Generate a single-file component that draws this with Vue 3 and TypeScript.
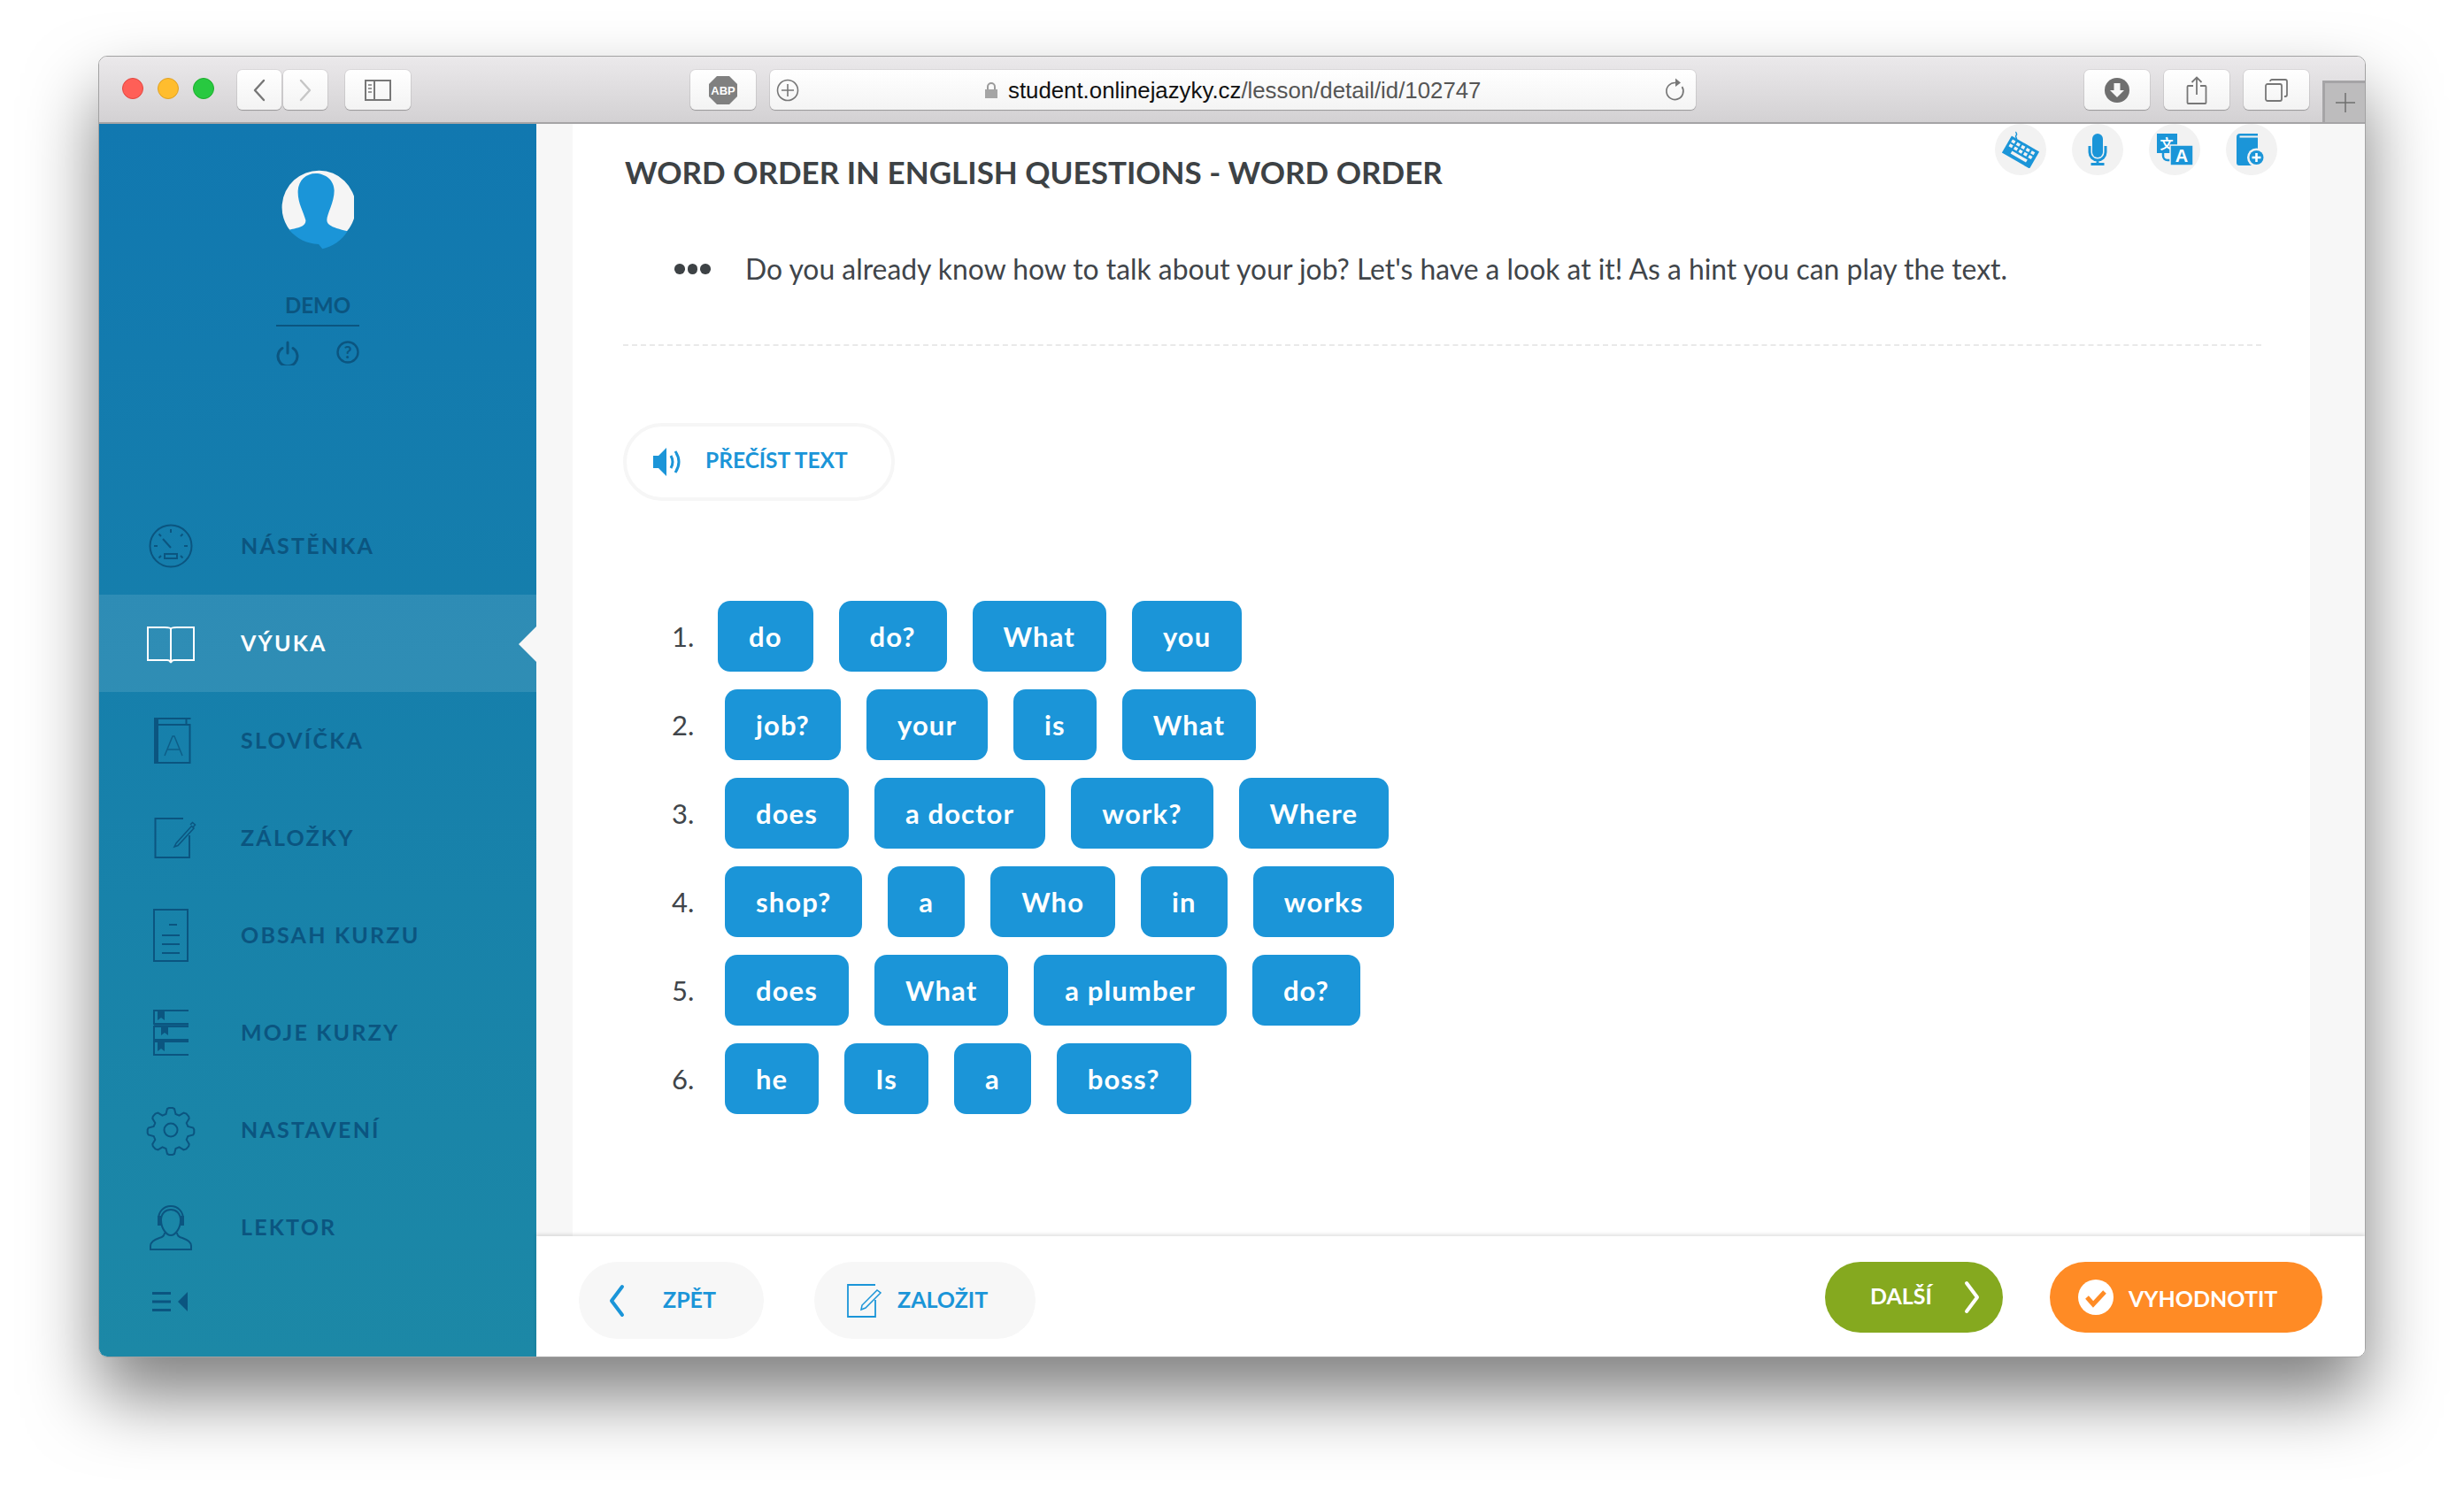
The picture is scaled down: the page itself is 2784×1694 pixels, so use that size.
<script setup lang="ts">
interface MenuItem { label: string; icon: string; active?: boolean }
const menu: MenuItem[] = [
  { label: 'NÁSTĚNKA', icon: 'gauge' },
  { label: 'VÝUKA', icon: 'book', active: true },
  { label: 'SLOVÍČKA', icon: 'vocab' },
  { label: 'ZÁLOŽKY', icon: 'note' },
  { label: 'OBSAH KURZU', icon: 'doc' },
  { label: 'MOJE KURZY', icon: 'courses' },
  { label: 'NASTAVENÍ', icon: 'gear' },
  { label: 'LEKTOR', icon: 'tutor' },
]
const rows: string[][] = [
  ['do', 'do?', 'What', 'you'],
  ['job?', 'your', 'is', 'What'],
  ['does', 'a doctor', 'work?', 'Where'],
  ['shop?', 'a', 'Who', 'in', 'works'],
  ['does', 'What', 'a plumber', 'do?'],
  ['he', 'Is', 'a', 'boss?'],
]
const keyCols = [0, 1, 2, 3, 4]
const keyRows = [0, 1]
</script>

<template>
  <div class="page">
    <div class="window">
      <header class="toolbar">
        <div class="lights">
          <span class="light red"></span><span class="light yellow"></span><span class="light green"></span>
        </div>
        <div class="navpair">
          <button class="tb nav"><svg width="16" height="26" viewBox="0 0 16 26"><path d="M13 2 3 13l10 11" fill="none" stroke="#777" stroke-width="2.400" stroke-linecap="round" stroke-linejoin="round"/></svg></button>
          <button class="tb nav"><svg width="16" height="26" viewBox="0 0 16 26"><path d="M3 2l10 11L3 24" fill="none" stroke="#c6c6c6" stroke-width="2.400" stroke-linecap="round" stroke-linejoin="round"/></svg></button>
        </div>
        <button class="tb side"><svg width="30" height="24" viewBox="0 0 30 24"><rect x="1" y="1" width="28" height="22" fill="none" stroke="#777" stroke-width="2"/><path d="M11 1v22" stroke="#777" stroke-width="2"/><path d="M4 6h4M4 10h4M4 14h4" stroke="#999" stroke-width="2"/></svg></button>
        <button class="tb abp"><svg width="34" height="34" viewBox="0 0 34 34"><path d="M10 1h14l9 9v14l-9 9H10l-9-9V10z" fill="#808080"/><text x="17" y="22" text-anchor="middle" class="abp-text">ABP</text></svg></button>
        <div class="urlbar">
          <svg class="plus" width="26" height="26" viewBox="0 0 26 26"><circle cx="13" cy="13" r="11.500" fill="none" stroke="#777" stroke-width="1.600"/><path d="M13 6v14M6 13h14" stroke="#777" stroke-width="1.600"/></svg>
          <div class="urltext">
            <svg width="16" height="20" viewBox="0 0 16 20"><path d="M4 9V6a4 4 0 0 1 8 0v3" fill="none" stroke="#9b9b9b" stroke-width="2"/><rect x="1" y="9" width="14" height="10" fill="#a5a5a5"/></svg>
            <span class="host">student.onlinejazyky.cz</span><span class="path">/lesson/detail/id/102747</span>
          </div>
          <svg class="reload" width="24" height="28" viewBox="0 0 24 28"><path d="M19.500 11A9.500 9.500 0 1 1 12 6.500" fill="none" stroke="#777" stroke-width="1.700"/><path d="M12 1.500 18 6.500 12 11z" fill="#777"/></svg>
        </div>
        <div class="tb-right">
          <button class="tb small"><svg width="28" height="28" viewBox="0 0 28 28"><circle cx="14" cy="14" r="14" fill="#6f6f6f"/><path d="M10.500 6h7v8H22l-8 8-8-8h4.500z" fill="#f7f7f7"/></svg></button>
          <button class="tb small"><svg width="24" height="32" viewBox="0 0 24 32"><path d="M8 11H2.500a1 1 0 0 0-1 1v18a1 1 0 0 0 1 1h19a1 1 0 0 0 1-1V12a1 1 0 0 0-1-1H16" fill="none" stroke="#777" stroke-width="1.800"/><path d="M12 21V1.500M6.500 7 12 1.500 17.500 7" fill="none" stroke="#777" stroke-width="1.800"/></svg></button>
          <button class="tb small"><svg width="26" height="26" viewBox="0 0 26 26"><rect x="1" y="6" width="18" height="19" rx="2" fill="none" stroke="#777" stroke-width="1.800"/><path d="M6 3V3a2 2 0 0 1 2-2h15a2 2 0 0 1 2 2v15a2 2 0 0 1-2 2h-1" fill="none" stroke="#777" stroke-width="1.800"/></svg></button>
        </div>
        <div class="newtab"><svg width="22" height="22" viewBox="0 0 22 22"><path d="M11 0v22M0 11h22" stroke="#6f6f6f" stroke-width="1.500"/></svg></div>
      </header>

      <div class="body">
        <aside class="sidebar">
          <div class="profile">
            <svg class="avatar" width="84" height="94" viewBox="620 158 252 282">
              <path d="M655 375A125 125 0 1 1 848 378Z" fill="#f5f5f5"/>
              <path d="M652 373C690 365 710 360 708 340 700 310 680 280 682 240 684 205 710 182 742 182 775 182 805 205 805 240 805 280 780 320 780 340 780 360 810 368 850 378 830 410 800 430 765 438L752 422C710 418 680 405 652 373Z" fill="#1b95d8"/>
            </svg>
            <div class="username">DEMO</div>
            <div class="profile-actions">
              <svg width="26" height="28" viewBox="0 0 26 28"><path d="M7 8.500a11 11 0 1 0 12 0" fill="none" stroke="#0b5580" stroke-width="3" stroke-linecap="round"/><path d="M13 2v12" stroke="#0b5580" stroke-width="3" stroke-linecap="round"/></svg>
              <svg width="26" height="26" viewBox="0 0 26 26"><circle cx="13" cy="13" r="11.500" fill="none" stroke="#0b5580" stroke-width="2.400"/><text x="13" y="19.500" text-anchor="middle" class="q">?</text></svg>
            </div>
          </div>

          <nav class="menu">
            <a v-for="item in menu" :key="item.label" class="item" :class="{ active: item.active }">
              <svg class="ico" width="60" height="60" viewBox="0 0 60 60" fill="none" stroke="currentColor" stroke-width="2">
                <template v-if="item.icon === 'gauge'">
                  <circle cx="30" cy="30" r="23.500"/>
                  <path d="M30 11v4M43.500 16.500l-2.500 2.500M49 30h-4M16.500 16.500l2.500 2.500M11 30h4M16.500 43.500 19 41M43.500 43.500 41 41M21 22l9 10"/>
                  <rect x="23" y="39" width="14" height="5"/>
                </template>
                <template v-else-if="item.icon === 'book'">
                  <path d="M30 52c-.5-2-2-3-4-3H4V12h19c4 0 7 .5 7 2 0-1.500 3-2 7-2h19v37H34c-2 0-3.500 1-4 3zM30 14v38"/>
                </template>
                <template v-else-if="item.icon === 'vocab'">
                  <path d="M12.500 5h40M12.500 5v50h39V12h-39M47.500 12V5"/>
                  <path d="M12 5h3v50h-3z" fill="currentColor"/>
                  <path d="M23 47l9-22h2l9 22M26 40h14" stroke-width="1.500" opacity=".8"/>
                </template>
                <template v-else-if="item.icon === 'note'">
                  <path d="M44 8H12.500v44h38.500V27"/>
                  <path d="M36 36l-2 4 4-1.500 18-19.500-2.500-2.500zM52 15l2.500-2.500 3 2.500-2.500 3" stroke-width="1.500"/>
                </template>
                <template v-else-if="item.icon === 'doc'">
                  <path d="M11 1h38v58H11z"/>
                  <path d="M28 18h9M20 30h20M20 40h20M20 50h20"/>
                </template>
                <template v-else-if="item.icon === 'courses'">
                  <path d="M50 5H11v15h39M50 23H11v15h39M50 40H11v15h39"/>
                  <path d="M50 21H11M50 38H11" stroke-width="1.500"/>
                  <path d="M15 6h8v10l-4-3-4 3zM19 23h8v10l-4-3-4 3zM15 41h8v10l-4-3-4 3z" fill="currentColor" stroke="none"/>
                </template>
                <template v-else-if="item.icon === 'gear'">
                  <path d="M26 6l2-1h4l2 1 1.500 6 4 1.600 5-3 3 1 2.700 3 .5 2.400-3 5 1.600 4 6 1.500 1 2v4l-1 2-6 1.500-1.600 4 3 5-.5 2.400-2.700 3-3 1-5-3-4 1.600-1.500 6-2 1h-4l-2-1-1.500-6-4-1.600-5 3-3-1-2.700-3-.5-2.400 3-5-1.600-4-6-1.500-1-2v-4l1-2 6-1.500 1.600-4-3-5 .5-2.400 2.700-3 3-1 5 3 4-1.600z"/>
                  <circle cx="30" cy="30" r="7.500"/>
                </template>
                <template v-else-if="item.icon === 'tutor'">
                  <path d="M16 21C16 12 22 6 30 6s14 6 14 15"/>
                  <path d="M19 22c0-8 5-12 11-12s11 4 11 12c0 9-6 17-11 17s-11-8-11-17z"/>
                  <path d="M16 18h3v9h-3zM41 18h3v9h-3z" fill="currentColor"/>
                  <path d="M23 36c0 3-2 5-6 6-6 2-10 5-10 9v4h46v-4c0-4-4-7-10-9-4-1-6-3-6-6"/>
                </template>
              </svg>
              <span class="label">{{ item.label }}</span>
            </a>
          </nav>

          <svg class="collapse" width="42" height="24" viewBox="0 0 42 24"><path d="M1 1h21v3H1zM1 10.500h21v3H1zM1 20h21v3H1z" fill="#0b5580"/><path d="M41 1v22L30 12z" fill="#0b5580"/></svg>
        </aside>

        <main class="main">
          <div class="content">
            <section class="sheet">
              <div class="head">
                <h1>WORD ORDER IN ENGLISH QUESTIONS - WORD ORDER</h1>
                <div class="tools">
                  <span class="tool">
                    <svg width="44" height="42" viewBox="0 0 44 42">
                      <path d="M17 10c2-2-2-3 0-5s-1-3 0-4" fill="none" stroke="#1b95d8" stroke-width="1.500"/>
                      <g transform="rotate(30 22 24)">
                        <rect x="4" y="13" width="36" height="22" fill="#1b95d8"/>
                        <template v-for="r in keyRows" :key="r">
                          <rect v-for="c in keyCols" :key="c" :x="7 + c * 6.300" :y="16 + r * 5.500" width="4" height="3.500" fill="#f2f2f2"/>
                        </template>
                        <rect x="13" y="27.500" width="20" height="3.500" fill="#f2f2f2"/>
                      </g>
                    </svg>
                  </span>
                  <span class="tool"><svg width="22" height="36" viewBox="0 0 22 36"><rect x="5" y="0" width="12" height="27" rx="6" fill="#1b95d8"/><path d="M2 14v7a9 9 0 0 0 18 0v-7M11 30v4" fill="none" stroke="#1b95d8" stroke-width="3"/><path d="M3.500 33h15v3h-15z" fill="#1b95d8"/></svg></span>
                  <span class="tool"><svg width="42" height="36" viewBox="0 0 42 36"><path d="M1 0h23v22H1z" fill="#1b95d8"/><text x="12" y="17" text-anchor="middle" class="t-x">文</text><path d="M8 22v3a5 5 0 0 0 5 5h4" fill="none" stroke="#1b95d8" stroke-width="2.500"/><path d="M16 13h26v23H16z" fill="#1b95d8" stroke="#f2f2f2" stroke-width="1.500"/><text x="29" y="32" text-anchor="middle" class="t-a">A</text></svg></span>
                  <span class="tool"><svg width="34" height="36" viewBox="0 0 34 36"><path d="M0 4a4 4 0 0 1 4-4h20v2.500H3.500v2H24V36H3a3 3 0 0 1-3-3z" fill="#1b95d8"/><circle cx="22.500" cy="27" r="10.500" fill="#f2f2f2"/><circle cx="22.500" cy="27" r="8" fill="#1b95d8"/><path d="M22.500 22v10M17.500 27h10" stroke="#fff" stroke-width="2.600"/></svg></span>
                </div>
              </div>
              <div class="intro">
                <span class="dots"><i></i><i></i><i></i></span>
                <p>Do you already know how to talk about your job? Let's have a look at it! As a hint you can play the text.</p>
              </div>
              <div class="rule"></div>
              <button class="read">
                <svg width="34" height="32" viewBox="0 0 34 32"><path d="M0 9h6l9-9v32l-9-9H0z" fill="#1b95d8"/><path d="M20 9q4 7 0 14M25 4q8 12 0 24" fill="none" stroke="#1b95d8" stroke-width="3"/></svg>
                <span>PŘEČÍST TEXT</span>
              </button>
              <ol class="exercise">
                <li v-for="(row, i) in rows" :key="i" class="row">
                  <span class="num">{{ i + 1 }}.</span>
                  <span v-for="(w, j) in row" :key="j" class="tile">{{ w }}</span>
                </li>
              </ol>
            </section>
          </div>
          <footer class="footer">
            <button class="fb ghost back">
              <svg width="18" height="38" viewBox="0 0 18 38"><path d="M15 3 3 19l12 16" fill="none" stroke="#1b95d8" stroke-width="4" stroke-linecap="round" stroke-linejoin="round"/></svg>
              <span>ZPĚT</span>
            </button>
            <button class="fb ghost save">
              <svg width="40" height="40" viewBox="0 0 40 40"><path d="M33 2H2v36h31V19" fill="none" stroke="#1b95d8" stroke-width="1.800"/><path d="M18 25l-1 5 5-2 17-17-4-3z" fill="none" stroke="#1b95d8" stroke-width="1.500"/></svg>
              <span>ZALOŽIT</span>
            </button>
            <span class="spacer"></span>
            <button class="fb next">
              <span>DALŠÍ</span>
              <svg width="18" height="38" viewBox="0 0 18 38"><path d="M3 3l12 16L3 35" fill="none" stroke="#fff" stroke-width="4" stroke-linecap="round" stroke-linejoin="round"/></svg>
            </button>
            <button class="fb eval">
              <svg width="40" height="40" viewBox="0 0 40 40"><circle cx="20" cy="20" r="20" fill="#fff"/><path d="M10 20l7 8 13-14" fill="none" stroke="#ff8b25" stroke-width="5"/></svg>
              <span>VYHODNOTIT</span>
            </button>
          </footer>
        </main>
      </div>
    </div>
  </div>
</template>

<style>
html, body { margin: 0; background: #fff; }
</style>

<style scoped>
.page { width: 2784px; height: 1694px; padding: 63px 111px 0; box-sizing: border-box; overflow: hidden; font-family: Lato, "Open Sans", sans-serif; }
.window { width: 2562px; height: 1471px; box-sizing: border-box; border: 1px solid rgba(100,100,100,.6); display: flex; flex-direction: column; border-radius: 10px; overflow: hidden; box-shadow: 0 44px 80px rgba(0,0,0,.5); }
button { font-family: inherit; border: 0; padding: 0; cursor: pointer; }
.toolbar { height: 74px; flex: none; box-sizing: content-box; border-bottom: 2px solid #a5a4a6; background: linear-gradient(#ebe9eb, #d3d1d3); display: flex; align-items: flex-start; position: relative; }
.lights { display: flex; gap: 16px; margin: 24px 0 0 26px; }
.light { width: 24px; height: 24px; border-radius: 50%; box-sizing: border-box; }
.red { background: #ff5f57; border: 1px solid #e2463f; }
.yellow { background: #ffbd2e; border: 1px solid #dfa023; }
.green { background: #28c940; border: 1px solid #1dad2b; }
.tb { height: 45px; margin-top: 15px; background: linear-gradient(#fff, #f3f3f3); border-radius: 6px; box-shadow: 0 1px 1px rgba(0,0,0,.25), 0 0 0 1px rgba(0,0,0,.06); display: flex; align-items: center; justify-content: center; }
.navpair { display: flex; gap: 2px; margin-left: 26px; }
.nav { width: 50px; }
.side { width: 74px; margin-left: 20px; }
.abp { width: 74px; margin-left: 316px; }
.urlbar { width: 1046px; height: 45px; margin: 15px 0 0 16px; background: linear-gradient(#fff, #f4f4f4); border-radius: 6px; box-shadow: 0 1px 1px rgba(0,0,0,.25), 0 0 0 1px rgba(0,0,0,.06); display: flex; align-items: center; position: relative; }
.plus { margin-left: 7px; }
.urltext { position: absolute; left: 242px; top: 0; height: 46px; display: flex; align-items: center; font: 25.800px "Liberation Sans", sans-serif; white-space: nowrap; }
.urltext svg { margin-right: 11px; }
.host { color: #111; }
.path { color: #555; }
.reload { position: absolute; top: 8px; right: 11px; }
.tb-right { display: flex; gap: 16px; margin-left: 439px; }
.small { width: 74px; }
.newtab { position: absolute; right: 0; top: 27px; width: 48px; height: 47px; background: #bdbcbd; border-left: 3px solid #a5a4a6; border-top: 3px solid #a5a4a6; box-sizing: border-box; display: flex; align-items: center; justify-content: center; }

.body { flex: 1; display: flex; min-height: 0; }
.sidebar { width: 494px; flex: none; background: linear-gradient(#1178b0, #1c88a6); display: flex; flex-direction: column; color: #0b5580; }
.profile { height: 422px; flex: none; box-sizing: border-box; padding-top: 48px; display: flex; flex-direction: column; align-items: center; }
.avatar { margin-left: -3px; }
.username { width: 94px; margin-top: 48px; padding-bottom: 7px; border-bottom: 2px solid #0b5580; text-align: center; font-size: 24px; font-weight: 700; line-height: 30px; }
.profile-actions { display: flex; justify-content: space-between; width: 94px; margin-top: 16px; }
.menu { display: flex; flex-direction: column; }
.item { height: 110px; display: flex; align-items: center; padding-left: 51px; position: relative; color: #0b5580; }
.item.active { background: rgba(255,255,255,.11); color: #fff; }
.item.active::after { content: ""; position: absolute; right: 0; top: 36px; border: 20px solid transparent; border-left: 0; border-right-color: #f7f7f7; }
.ico { flex: none; }
.label { margin-left: 49px; font-size: 25px; font-weight: 700; letter-spacing: 2.200px; margin-top: -3px; }
.collapse { margin: 17px 0 0 59px; }

.main { flex: 1; display: flex; flex-direction: column; min-width: 0; }
.content { flex: 1; min-height: 0; background: #f7f7f7; padding: 0 62px 0 41px; display: flex; }
.sheet { flex: 1; background: #fff; padding: 0 55px 0 57px; box-sizing: border-box; }
.head { display: flex; justify-content: space-between; height: 120px; align-items: flex-start; }
h1 { margin: 33px 0 0 2px; font-size: 35px; line-height: 42px; font-weight: 700; color: #3d4245; }
.tools { display: flex; gap: 29px; margin-top: 0; margin-right: -18px; }
.tool { width: 58px; height: 58px; border-radius: 50%; background: #f2f2f2; display: flex; align-items: center; justify-content: center; }
.intro { display: flex; align-items: center; height: 129px; padding-left: 58px; box-sizing: border-box; padding-bottom: 41px; color: #40454a; }
.dots { display: flex; gap: 3px; width: 80px; flex: none; }
.dots i { width: 11.500px; height: 11.500px; border-radius: 50%; background: #3d4245; }
.intro p { margin: 0; font-size: 31.850px; line-height: 40px; }
.rule { border-top: 2px dashed #e9e9e9; }
.read { margin: 87px 0 0 0; width: 307px; height: 88px; box-sizing: border-box; border: 4px solid #f6f6f6; border-radius: 44px; background: #fff; display: flex; align-items: center; padding-left: 30px; color: #1b95d8; font-size: 24.500px; font-weight: 700; }
.read span { margin-left: 25px; margin-top: -6px; }
.exercise { list-style: none; margin: 113px 0 0 0; padding: 0 0 0 55px; display: flex; flex-direction: column; gap: 20px; }
.row { display: flex; align-items: center; gap: 29px; height: 80px; }
.num { width: 31px; font-size: 31px; color: #40454a; }
.row:first-child .num { width: 23px; }
.tile { height: 80px; padding: 0 35px; border-radius: 14px; background: #1b95d8; color: #fff; font-size: 31px; font-weight: 700; letter-spacing: 1.100px; display: flex; align-items: center; white-space: pre; }
.footer { height: 136px; flex: none; background: #fff; box-shadow: 0 -2px 4px rgba(0,0,0,.12); position: relative; display: flex; align-items: flex-start; padding: 29px 48px 0 48px; box-sizing: border-box; }
.fb { border-radius: 44px; display: flex; align-items: center; font-size: 25px; font-weight: 700; box-sizing: border-box; }
.ghost { height: 87px; background: #f7f7f7; color: #1b95d8; }
.ghost span { margin-top: -3px; }
.back { width: 209px; padding-left: 34px; }
.back span { margin-left: 43px; }
.save { width: 250px; margin-left: 57px; padding-left: 36px; }
.save span { margin-left: 18px; }
.spacer { flex: 1; }
.next { width: 201px; height: 80px; background: #85a91f; color: #fff; padding-left: 51px; }
.next span { margin-top: -4px; }
.next svg { margin-left: 36px; }
.eval { width: 308px; height: 80px; margin-left: 53px; background: #ff8b25; color: #fff; padding-left: 32px; }
.eval span { margin-left: 17px; margin-top: 2px; }

.abp-text { font: 700 13px "Liberation Sans", sans-serif; fill: #fff; }
.q { font: 700 19px Lato, sans-serif; fill: #0b5580; }
.t-a { font: 700 20px "Liberation Sans", sans-serif; fill: #fff; }
.t-x { font: 700 15px "Noto Sans CJK SC", sans-serif; fill: #fff; }
</style>
